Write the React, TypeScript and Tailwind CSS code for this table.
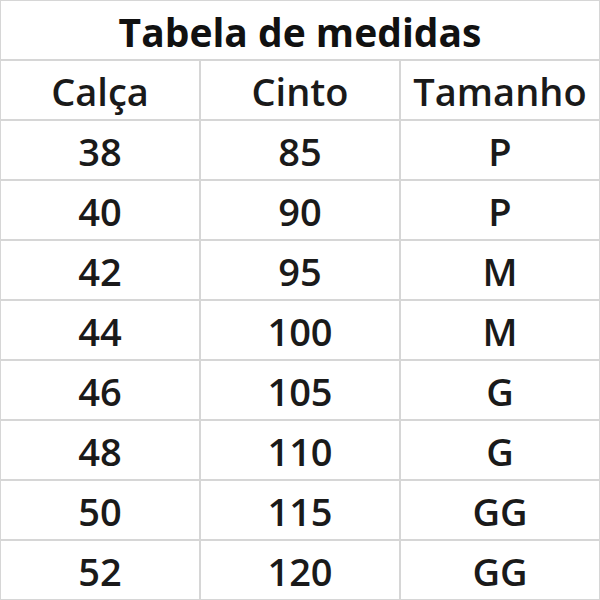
const ROWS: [string, string, string][] = [
  ['38', '85', 'P'],
  ['40', '90', 'P'],
  ['42', '95', 'M'],
  ['44', '100', 'M'],
  ['46', '105', 'G'],
  ['48', '110', 'G'],
  ['50', '115', 'GG'],
  ['52', '120', 'GG'],
];

function Cell({ children }: { children: React.ReactNode }) {
  return (
    <div className="flex items-center justify-center bg-white pt-[2px] text-[38px] font-semibold leading-none text-[#1a1a1a]">
      {children}
    </div>
  );
}

export default function App() {
  return (
    <div
      className="grid h-[600px] w-[600px] grid-cols-3 grid-rows-[repeat(10,1fr)] gap-[2px] bg-[#d6d6d6] p-[1px]"
      style={{ fontFamily: '"Open Sans", "Noto Sans", sans-serif' }}
    >
      <div className="col-span-3 flex items-center justify-center bg-white pt-[3px] text-[39px] font-bold leading-none text-[#111]">
        Tabela de medidas
      </div>
      <Cell>Calça</Cell>
      <Cell>Cinto</Cell>
      <Cell>Tamanho</Cell>
      {ROWS.map(([calca, cinto, tam]) => (
        <div key={calca} className="contents">
          <Cell>{calca}</Cell>
          <Cell>{cinto}</Cell>
          <Cell>{tam}</Cell>
        </div>
      ))}
    </div>
  );
}
